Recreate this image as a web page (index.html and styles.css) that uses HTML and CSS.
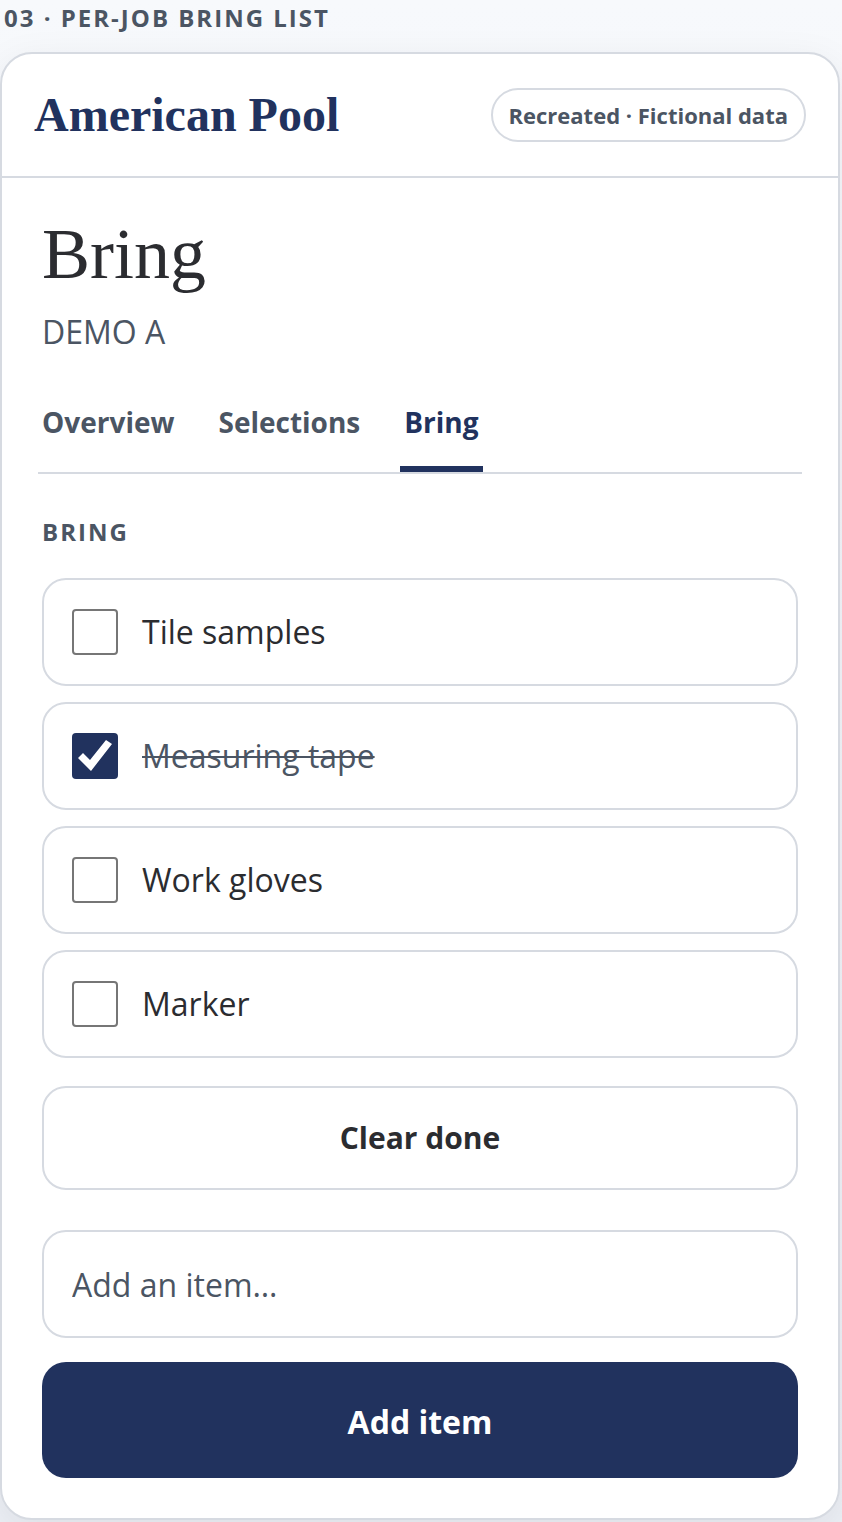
FILE: index.html
```html
<!DOCTYPE html>
<html lang="en">
<head>
<meta charset="UTF-8" />
<meta name="viewport" content="width=device-width, initial-scale=1" />
<title>Per-job bring list</title>
<link rel="stylesheet" href="styles.css">
</head>
<body>
<h2 class="frame-label">03 · Per-job bring list</h2>
<div class="card">
  <header class="card-header">
    <div class="brand">American Pool</div>
    <span class="pill">Recreated · Fictional data</span>
  </header>
  <main class="content">
    <h1>Bring</h1>
    <p class="job-name">DEMO A</p>
    <nav class="tabs">
      <a class="tab" href="#overview">Overview</a>
      <a class="tab" href="#selections">Selections</a>
      <a class="tab active" href="#bring" aria-current="page">Bring</a>
    </nav>
    <h3 class="section-label">Bring</h3>
    <ul class="bring-list">
      <li><label class="item"><input type="checkbox" /><span>Tile samples</span></label></li>
      <li><label class="item"><input type="checkbox" checked /><span>Measuring tape</span></label></li>
      <li><label class="item"><input type="checkbox" /><span>Work gloves</span></label></li>
      <li><label class="item"><input type="checkbox" /><span>Marker</span></label></li>
    </ul>
    <button type="button" class="clear-btn">Clear done</button>
    <form class="add-form" onsubmit="return false">
      <input class="add-input" type="text" placeholder="Add an item…" aria-label="Add an item" />
      <button type="submit" class="add-btn">Add item</button>
    </form>
  </main>
</div>
</body>
</html>
```

FILE: styles.css
```css
:root {
  --navy: #21325e;
  --ink: #2b2c30;
  --muted: #4b5563;
  --line: #d6dae1;
  --sans: "Segoe UI", "Open Sans", "Noto Sans", sans-serif;
  --serif: "Liberation Serif", serif;
}
* { box-sizing: border-box; }
body {
  margin: 0;
  padding: 0 2px 2px 0;
  font-family: var(--sans);
  font-size: 32px;
  color: var(--ink);
  background: linear-gradient(180deg, #f7f9fc 0%, #edf0f5 100%);
}
.frame-label,
.section-label {
  margin: 0;
  font-size: 24px;
  line-height: 32px;
  font-weight: 700;
  letter-spacing: 2px;
  text-transform: uppercase;
  color: var(--muted);
}
.frame-label {
  padding: 2px 4px 18px;
}
.card {
  background: #fff;
  border: 2px solid var(--line);
  border-radius: 32px;
  box-shadow: 0 12px 40px rgba(20, 30, 50, 0.08);
  overflow: hidden;
}
.card-header {
  display: flex;
  align-items: center;
  justify-content: space-between;
  padding: 34px 32px;
  border-bottom: 2px solid var(--line);
}
.brand {
  font-family: var(--serif);
  font-size: 48px;
  line-height: 54px;
  font-weight: 700;
  color: var(--navy);
}
.pill {
  padding: 9px 16px;
  border: 2px solid var(--line);
  border-radius: 999px;
  font-size: 22px;
  line-height: 32px;
  font-weight: 700;
  color: var(--muted);
}
.content {
  padding: 40px;
}
h1 {
  margin: 0;
  font-family: var(--serif);
  font-size: 72px;
  line-height: 72px;
  font-weight: 400;
}
.job-name {
  margin: 20px 0 0;
  line-height: 44px;
  font-weight: 500;
  color: var(--muted);
}
.tabs {
  display: flex;
  gap: 36px;
  margin: 32px -4px 0;
  border-bottom: 2px solid var(--line);
}
.tab {
  padding: 14px 4px 22px;
  border-bottom: 6px solid transparent;
  font-size: 28px;
  line-height: 44px;
  font-weight: 700;
  color: var(--muted);
  text-decoration: none;
}
.tab.active {
  color: var(--navy);
  border-bottom-color: var(--navy);
}
.section-label {
  margin: 42px 0 30px;
}
.bring-list {
  display: flex;
  flex-direction: column;
  gap: 16px;
  margin: 0;
  padding: 0;
  list-style: none;
}
.item {
  display: flex;
  align-items: center;
  gap: 24px;
  padding: 28px;
  border: 2px solid var(--line);
  border-radius: 24px;
  line-height: 48px;
  cursor: pointer;
}
.item input {
  appearance: none;
  flex: none;
  width: 46px;
  height: 46px;
  margin: 0;
  border: 2px solid #767676;
  border-radius: 4px;
  background: #fff;
}
.item input:checked {
  border: none;
  background: var(--navy);
}
.item input:checked::before {
  content: "";
  display: block;
  width: 46px;
  height: 46px;
  background: #fff;
  clip-path: polygon(6px 25px, 11px 20px, 18px 27px, 34px 7px, 40px 11px, 19px 38px);
}
.item input:checked + span {
  color: var(--muted);
  text-decoration: line-through;
  text-decoration-thickness: 2px;
}
.clear-btn,
.add-btn,
.add-input {
  display: block;
  width: 100%;
  border: 2px solid var(--line);
  border-radius: 24px;
  font-family: var(--sans);
}
.clear-btn,
.add-btn {
  font-weight: 700;
  cursor: pointer;
}
.clear-btn {
  margin: 28px 0 40px;
  padding: 28px;
  background: #fff;
  color: var(--ink);
  font-size: 30px;
  line-height: 44px;
}
.add-form {
  display: flex;
  flex-direction: column;
  gap: 24px;
}
.add-input {
  height: 108px;
  padding: 0 28px;
  background: #fff;
  color: var(--ink);
  font-size: 32px;
}
.add-input::placeholder {
  color: var(--muted);
  opacity: 1;
}
.add-btn {
  padding: 36px 28px 32px;
  border: none;
  background: var(--navy);
  color: #fff;
  font-size: 32px;
  line-height: 48px;
}
```
